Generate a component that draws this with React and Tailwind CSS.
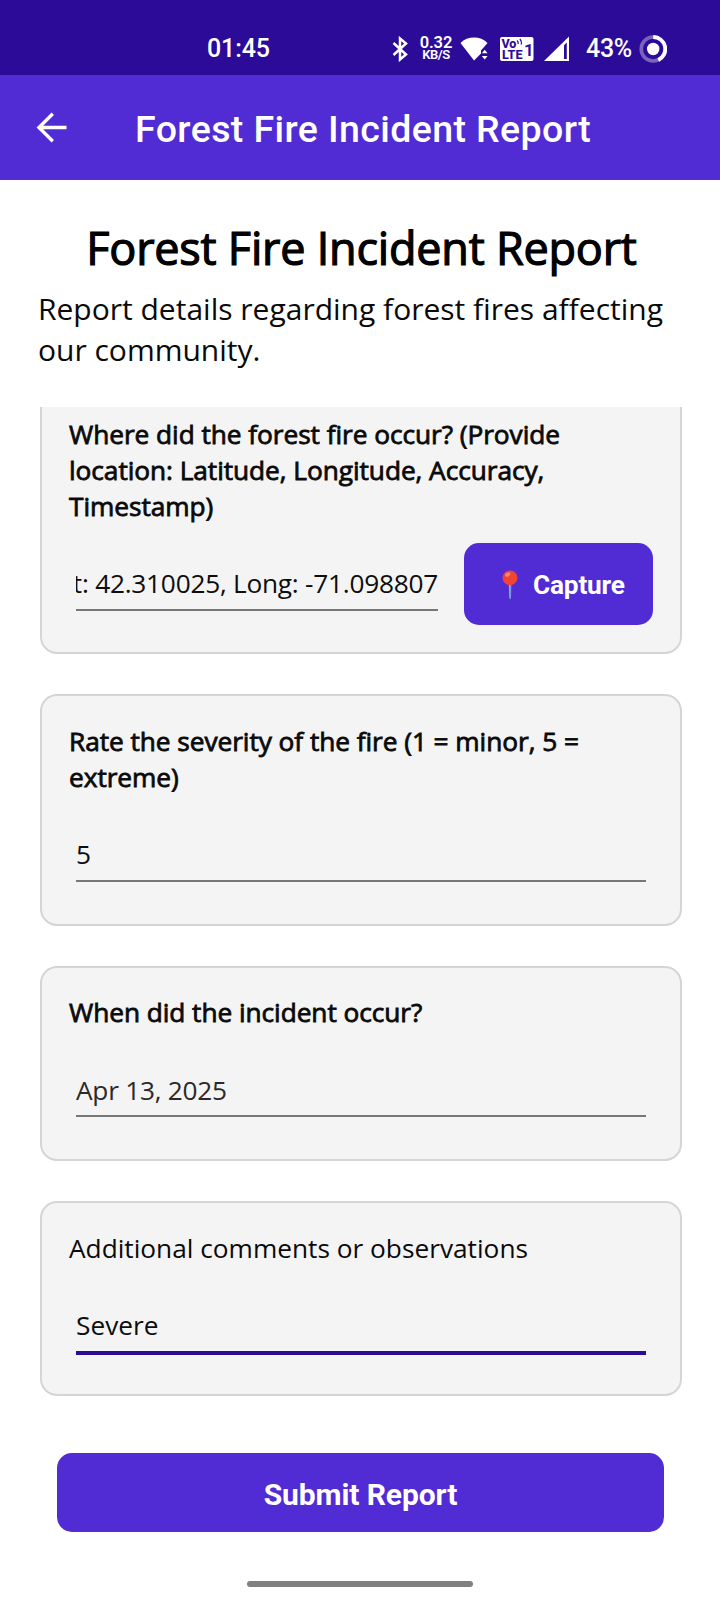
const SANS = "font-['Open_Sans',sans-serif]";
const ROBOTO = "font-['Roboto',sans-serif]";

function StatusBar() {
  return (
    <header className={`flex h-[75px] shrink-0 items-center bg-[#2b0b98] pt-[22px] text-white ${ROBOTO}`}>
      <div className="ml-[207px] w-[185px] pt-px text-[25px] leading-[30px] font-medium tracking-[-0.1px]">01:45</div>
      <svg className="h-[26px] w-[17px] shrink-0" viewBox="0 0 17 26" fill="none" stroke="white" strokeWidth="2.5" strokeLinejoin="miter">
        <path d="M1.5 7 14 18.5 8 23.5V2.5L14 7.5 1.5 19" />
      </svg>
      <div className="ml-[10px] flex w-[34px] flex-col items-center font-semibold">
        <span className="text-[16.5px] leading-[13px] tracking-[-0.1px]">0.32</span>
        <span className="text-[13px] leading-[12px] tracking-[-0.5px]">KB/S</span>
      </div>
      <svg className="ml-[7px] h-[26px] w-[30px] shrink-0" viewBox="0 0 30 26" fill="white">
        <path d="M0.5 7C7.5 -0.3 20.5 -0.3 27.5 7L21 14.5V17.5L14 24.5Z" />
        <path d="m21.8 17.3 2.9-3.5 2.9 3.5zM21.8 20l2.9 3.5 2.9-3.5z" />
      </svg>
      <svg className="ml-[10px] h-[26px] w-[34px] shrink-0" viewBox="0 0 34 26">
        <rect x="0" y="1" width="33.5" height="24" rx="2" fill="white" />
        <g fill="#2b0b98" fontFamily="Roboto, sans-serif" fontWeight="800">
          <text x="1.4" y="12" fontSize="12.5" textLength="15" lengthAdjust="spacingAndGlyphs">Vo</text>
          <text x="2" y="23" fontSize="13" textLength="20.5" lengthAdjust="spacingAndGlyphs">LTE</text>
          <text x="24" y="19.5" fontSize="17" fontWeight="600" textLength="8">1</text>
        </g>
        <path d="M17 4.5q1.5 1.2 1.2 3.5M19.8 3q2 1.8 1.5 5.5" fill="none" stroke="#2b0b98" strokeWidth="1.2" />
      </svg>
      <svg className="ml-[10px] h-[26px] w-[26px] shrink-0" viewBox="0 0 26 26">
        <path d="M0 25 25 0.5V25Z" fill="white" />
        <path d="M20 9.2 22.8 6.4V23H20Z" fill="#2b0b98" />
      </svg>
      <div className="ml-[16px] w-[53px] pt-px text-[25px] leading-[30px] font-medium tracking-[-0.3px]">43%</div>
      <svg className="h-[28px] w-[28px] shrink-0" viewBox="0 0 28 28" fill="none">
        <circle cx="14.2" cy="14" r="12" stroke="#7a63bd" strokeWidth="3.6" />
        <path d="M14.2 2a12 12 0 0 1 5.1 22.9" stroke="white" strokeWidth="3.8" />
        <circle cx="14.2" cy="14" r="6.2" fill="white" />
      </svg>
    </header>
  );
}

function AppBar() {
  return (
    <div className={`flex h-[105px] shrink-0 items-center bg-[#512bd4] text-white ${ROBOTO}`}>
      <svg className="ml-[36px] h-[32px] w-[32px] shrink-0" viewBox="0 0 32 32" fill="none" stroke="white" strokeWidth="3.4">
        <path d="M30.5 15.5H3M16.8 1.8 3 15.5 16.8 29.2" />
      </svg>
      <div className="ml-[67px] whitespace-nowrap pt-[2px] text-[37.5px] leading-[44px] font-medium tracking-[0.4px]">
        Forest Fire Incident Report
      </div>
    </div>
  );
}

function Card({ children, className }) {
  return (
    <section className={`flex flex-col rounded-[17px] border-2 border-[#d5d5d5] bg-[#f4f4f4] px-[27px] ${className}`}>
      {children}
    </section>
  );
}

function Label({ children, bold = true }) {
  return (
    <p className={`text-[26.25px] leading-[36px] text-[#0a0a0a] ${bold ? "tracking-[-0.05px] [-webkit-text-stroke:0.8px_#0a0a0a]" : ""}`}>
      {children}
    </p>
  );
}

function Field({ value, className }) {
  return <div className={`mx-[7px] text-[26.25px] leading-[36px] ${className}`}>{value}</div>;
}

function PinIcon() {
  return (
    <svg className="mt-[2px] h-[30px] w-[18px] shrink-0" viewBox="0 0 18 30">
      <path d="M7.7 13h2.8l-.5 15.5q-.9 1.2-1.8 0z" fill="#6f8fd0" />
      <path d="M8.2 14h.9v13h-.5z" fill="#9db8e6" />
      <circle cx="9" cy="7.8" r="7.4" fill="#f24435" />
      <ellipse cx="6.8" cy="4.6" rx="2.8" ry="1.8" transform="rotate(-30 6.8 4.6)" fill="#ff8a73" />
    </svg>
  );
}

export default function App() {
  return (
    <div className={`flex h-[1600px] w-[720px] flex-col overflow-hidden bg-white ${SANS}`}>
      <StatusBar />
      <AppBar />
      <div className="px-[38px] pt-[37px]">
        <h1 className="pl-[3px] text-center text-[45px] leading-[62px] tracking-[-0.22px] whitespace-nowrap text-black [-webkit-text-stroke:1.2px_black]">
          Forest Fire Incident Report
        </h1>
        <p className="mt-[9px] text-[30px] leading-[41px] text-[#0a0a0a]">
          Report details regarding forest fires affecting our community.
        </p>
      </div>
      <main className="mt-[37px] flex flex-col gap-[40px] pr-[38px] pl-[40px]">
        <section className="flex h-[247px] flex-col rounded-b-[17px] border-2 border-t-0 border-[#d5d5d5] bg-[#f4f4f4] px-[27px] pt-[9px]">
          <Label>
            Where did the forest fire occur? (Provide
            <br />
            location: Latitude, Longitude, Accuracy,
            <br />
            Timestamp)
          </Label>
          <div className="mt-[19px] flex items-start justify-between">
            <div className="mt-[22px] ml-[7px] flex w-[362px] justify-end overflow-hidden border-b-2 border-[#777777] pb-[8px] text-[26.25px] leading-[36px] tracking-[-0.25px] whitespace-nowrap text-[#0d0d0d]">
              <span>Lat: 42.310025, Long: -71.098807</span>
            </div>
            <button className={`flex h-[82px] w-[189px] items-center rounded-[15px] bg-[#512bd4] pl-[37px] text-[26.25px] font-bold tracking-[-0.2px] text-white ${ROBOTO}`}>
              <PinIcon />
              <span className="ml-[14px] pt-[4px]">Capture</span>
            </button>
          </div>
        </section>
        <Card className="h-[232px] pt-[27px]">
          <Label>
            Rate the severity of the fire (1 = minor, 5 =
            <br />
            extreme)
          </Label>
          <Field value="5" className="mt-[41px] border-b-2 border-[#777777] pb-[8px] text-[#0d0d0d]" />
        </Card>
        <Card className="h-[195px] pt-[26px]">
          <Label>When did the incident occur?</Label>
          <Field value="Apr 13, 2025" className="mt-[42px] border-b-2 border-[#777777] pb-[7px] tracking-[-0.25px] text-[#2a2a2a]" />
        </Card>
        <Card className="h-[195px] pt-[27px]">
          <Label bold={false}>Additional comments or observations</Label>
          <Field value="Severe" className="mt-[41px] border-b-4 border-[#2b0b98] pb-[8px] text-[#0d0d0d]" />
        </Card>
      </main>
      <button className={`mx-auto mt-[57px] h-[79px] w-[607px] shrink-0 rounded-[15px] bg-[#512bd4] pt-[3px] pl-px text-[30px] font-bold tracking-[-0.1px] text-white ${ROBOTO}`}>
        Submit Report
      </button>
      <div className="mx-auto mt-[49px] h-[6px] w-[226px] shrink-0 rounded-full bg-[#808080]" />
    </div>
  );
}
